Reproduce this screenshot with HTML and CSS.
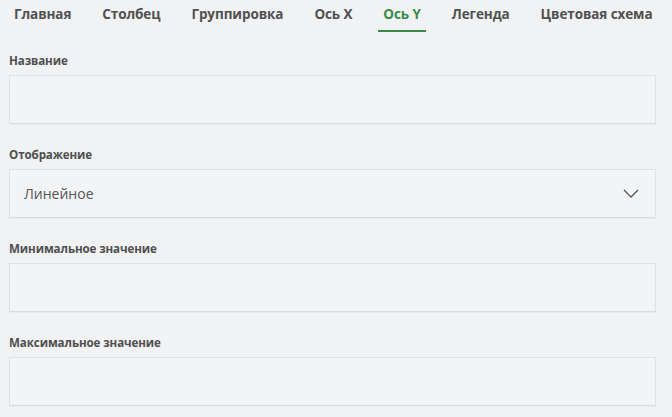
FILE: index.html
```html
<!DOCTYPE html>
<html lang="ru">
<head>
<meta charset="utf-8">
<link rel="stylesheet" href="styles.css">
</head>
<body>
<div class="panel">
  <nav class="tabs">
    <span class="tab">Главная</span>
    <span class="tab">Столбец</span>
    <span class="tab">Группировка</span>
    <span class="tab">Ось X</span>
    <span class="tab active">Ось Y</span>
    <span class="tab">Легенда</span>
    <span class="tab">Цветовая схема</span>
  </nav>
  <div class="form">
    <div class="field">
      <label class="label">Название</label>
      <div class="box"></div>
    </div>
    <div class="field">
      <label class="label">Отображение</label>
      <div class="box select">
        <span class="value">Линейное</span>
        <svg class="chev" width="16" height="9" viewBox="0 0 16 9"><path d="M1 1 L8 8 L15 1" fill="none" stroke="#555" stroke-width="1.3"/></svg>
      </div>
    </div>
    <div class="field">
      <label class="label">Минимальное значение</label>
      <div class="box"></div>
    </div>
    <div class="field">
      <label class="label">Максимальное значение</label>
      <div class="box"></div>
    </div>
  </div>
</div>
</body>
</html>
```
FILE: styles.css
```css
html, body {
  margin: 0;
  padding: 0;
  background: #f1f2f4;
}
body {
  font-family: "Open Sans", "Noto Sans", sans-serif;
  color: #4e4e4e;
  width: 672px;
  height: 417px;
  overflow: hidden;
}
.panel {
  padding: 0 16px 0 9px;
}
.tabs {
  display: flex;
  gap: 21px;
  white-space: nowrap;
}
.tab {
  flex-shrink: 0;
  padding: 4px 5px 6px;
  font-size: 13.5px;
  line-height: 20px;
  font-weight: 700;
  color: #505050;
  border-bottom: 2px solid transparent;
  letter-spacing: -0.1px;
}
.tab.active {
  color: #3a8a47;
  border-bottom-color: #3a8a47;
}
.form {
  margin-top: 21px;
  display: flex;
  flex-direction: column;
  gap: 23px;
}
.field {
  display: flex;
  flex-direction: column;
}
.label {
  font-size: 11.6px;
  line-height: 16px;
  font-weight: 700;
  color: #4f4f4f;
  margin-bottom: 6px;
  letter-spacing: -0.1px;
}
.box {
  height: 47px;
  border: 1px solid #dfe1e4;
  border-bottom-color: #d9dbde;
  background: #f3f4f6;
  box-shadow: 0 1px 0 rgba(0,0,0,0.03);
}
.select {
  display: flex;
  align-items: center;
  justify-content: space-between;
  padding: 0 16px 0 14px;
}
.value {
  font-size: 14px;
  color: #555;
}
.chev {
  display: block;
}
```
